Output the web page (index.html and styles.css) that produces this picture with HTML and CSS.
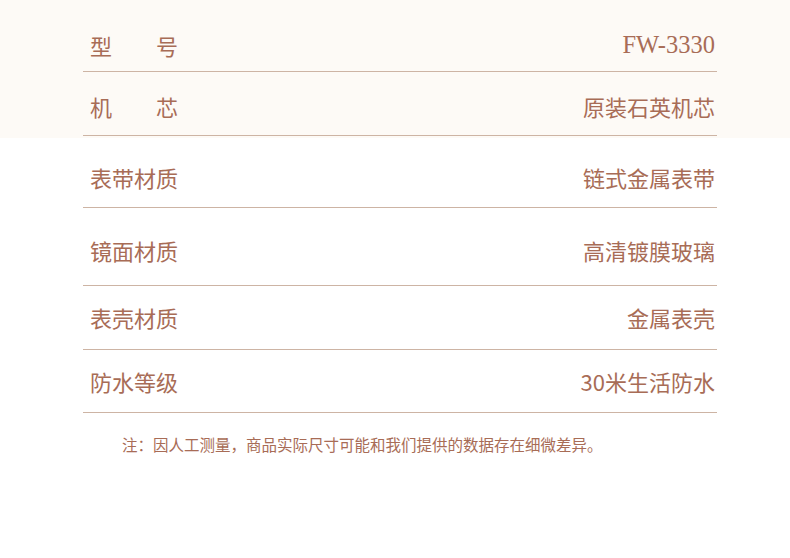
FILE: index.html
```html
<!DOCTYPE html>
<html lang="zh-CN">
<head>
<meta charset="utf-8">
<link rel="stylesheet" href="styles.css">
</head>
<body>
<div class="spec">
  <div class="row r1"><span class="label">型　　号</span><span class="value serif">FW-3330</span></div>
  <div class="row r2"><span class="label">机　　芯</span><span class="value">原装石英机芯</span></div>
  <div class="row r3"><span class="label">表带材质</span><span class="value">链式金属表带</span></div>
  <div class="row r4"><span class="label">镜面材质</span><span class="value">高清镀膜玻璃</span></div>
  <div class="row r5"><span class="label">表壳材质</span><span class="value">金属表壳</span></div>
  <div class="row r6"><span class="label">防水等级</span><span class="value">30米生活防水</span></div>
  <p class="note">注：因人工测量，商品实际尺寸可能和我们提供的数据存在细微差异。</p>
</div>
</body>
</html>
```

FILE: styles.css
```css
html, body {
  margin: 0;
  padding: 0;
}
body {
  width: 790px;
  height: 558px;
  background: linear-gradient(#fdfaf6 0, #fdfaf6 138px, #ffffff 138px);
  font-family: "Noto Sans CJK SC", "Noto Sans", sans-serif;
  font-weight: 400;
  color: #a86c56;
}
.spec {
  margin: 0 73px 0 83px;
}
.row {
  display: flex;
  justify-content: space-between;
  align-items: center;
  padding-left: 7px;
  padding-right: 2px;
  border-bottom: 1px solid #cdb4a4;
  font-size: 22px;
  line-height: 22px;
  height: 22px;
}
.label, .value {
  display: block;
  white-space: pre;
}
.serif {
  font-family: "Liberation Serif", "Noto Sans CJK SC", serif;
  font-size: 24.5px;
}
.r1 { padding-top: 34px; padding-bottom: 15px; }
.r2 { padding-top: 23px; padding-bottom: 18px; }
.r3 { padding-top: 30px; padding-bottom: 19px; }
.r4 { padding-top: 31px; padding-bottom: 24px; }
.r5 { padding-top: 20px; padding-bottom: 21px; }
.r6 { padding-top: 20px; padding-bottom: 20px; }
.note {
  margin: 23px 0 0 39px;
  font-size: 15.5px;
  line-height: 16px;
  white-space: nowrap;
}
```
